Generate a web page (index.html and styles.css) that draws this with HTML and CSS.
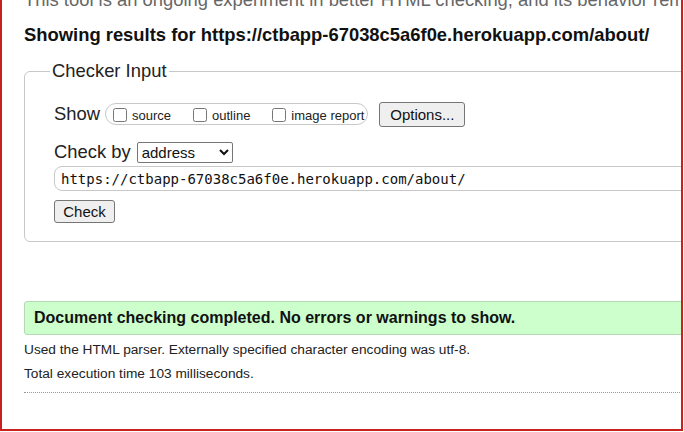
FILE: index.html
```html
<!DOCTYPE html>
<html lang="en">
<head>
<meta charset="utf-8">
<title>Nu Html Checker</title>
<link rel="stylesheet" href="styles.css">
</head>
<body>
<div class="frame">
  <div class="content">
    <p class="intro">This tool is an ongoing experiment in better HTML checking, and its behavior remains subject to change</p>
    <p class="showing">Showing results for https://ctbapp-67038c5a6f0e.herokuapp.com/about/</p>
    <fieldset class="checker">
      <legend>Checker Input</legend>
      <div class="row show-row">
        <span class="lbl">Show</span>
        <span class="pill">
          <label class="opt"><input type="checkbox"><span>source</span></label>
          <label class="opt"><input type="checkbox"><span>outline</span></label>
          <label class="opt"><input type="checkbox"><span>image report</span></label>
        </span>
        <button class="btn options" type="button">Options...</button>
      </div>
      <div class="row by-row">
        <span class="lbl">Check by</span>
        <select class="sel"><option>address</option></select>
      </div>
      <input class="url" type="text" value="https://ctbapp-67038c5a6f0e.herokuapp.com/about/">
      <button class="btn check" type="button">Check</button>
    </fieldset>
    <div class="success">Document checking completed. No errors or warnings to show.</div>
    <p class="details">Used the HTML parser. Externally specified character encoding was utf-8.</p>
    <p class="details">Total execution time 103 milliseconds.</p>
    <div class="dotted"></div>
  </div>
</div>
</body>
</html>
```
FILE: styles.css
```css
html, body {
  margin: 0;
  padding: 0;
  background: #fff;
}
.frame {
  width: 683px;
  height: 431px;
  box-sizing: border-box;
  border: 2px solid #c9211e;
  border-top: none;
  overflow: hidden;
  padding-left: 22px;
  font-family: "Liberation Sans", Arial, sans-serif;
  color: #111;
}
.content {
  width: 760px;
}
.intro {
  margin: -11px 0 0;
  font-size: 18.4px;
  line-height: 22px;
  color: #666;
  white-space: nowrap;
}
.showing {
  margin: 13px 0 0;
  font-size: 18.4px;
  line-height: 22px;
  font-weight: bold;
  white-space: nowrap;
}
.checker {
  margin: 14px 0 0;
  padding: 19px 0 18px 29px;
  border: 1px solid #c8c8c8;
  border-radius: 6px;
  min-width: 0;
}
.checker legend {
  font-size: 18.4px;
  line-height: 22px;
  padding: 0 2px;
  margin-left: -4px;
  color: #222;
}
.row {
  display: flex;
  align-items: center;
}
.show-row {
  height: 26px;
}
.lbl {
  font-size: 18.4px;
  line-height: 22px;
  margin-right: 5px;
  color: #222;
}
.pill {
  display: inline-flex;
  align-items: center;
  height: 22px;
  box-sizing: border-box;
  border: 1px solid #c8c8c8;
  border-radius: 11px;
  padding: 0 3px 0 2px;
}
.opt {
  display: flex;
  align-items: center;
  font-size: 13px;
  line-height: 16px;
  padding-top: 3px;
  margin-right: 17px;
  color: #222;
}
.opt:last-child {
  margin-right: 0;
}
.opt input {
  width: 14px;
  height: 14px;
  margin: 0 5px 2px 5px;
}
.btn {
  font-family: "Liberation Sans", Arial, sans-serif;
  font-size: 15px;
  color: #111;
  background: #efefef;
  border: 1px solid #767676;
  border-radius: 3px;
  padding: 0;
  box-sizing: border-box;
}
.options {
  margin-left: 11px;
  width: 86px;
  height: 25px;
}
.by-row {
  margin-top: 14px;
  height: 22px;
}
.sel {
  margin-left: 1px;
  width: 96px;
  height: 21px;
  font-family: "Liberation Sans", Arial, sans-serif;
  font-size: 15px;
  color: #111;
  border: 1px solid #767676;
  border-radius: 2px;
  background: #fff;
}
.url {
  display: block;
  margin-top: 3px;
  width: 700px;
  height: 25px;
  box-sizing: border-box;
  border: 1px solid #c8c8c8;
  border-radius: 8px;
  padding: 0 6px;
  font-family: "DejaVu Sans Mono", "Liberation Mono", monospace;
  font-size: 14px;
  color: #111;
}
.check {
  display: block;
  margin-top: 9px;
  width: 61px;
  height: 23px;
}
.success {
  margin-top: 59px;
  height: 34px;
  box-sizing: border-box;
  background: #ccffcc;
  border: 1px solid #b3d9b3;
  border-radius: 3px;
  padding-left: 9px;
  font-size: 16px;
  font-weight: bold;
  line-height: 32px;
  color: #111;
  white-space: nowrap;
}
.details {
  margin: 3px 0 0;
  font-size: 13.7px;
  line-height: 24px;
  color: #222;
}
.details + .details {
  margin-top: 0;
}
.dotted {
  margin-top: 6px;
  border-top: 1px dotted #999;
}
```
